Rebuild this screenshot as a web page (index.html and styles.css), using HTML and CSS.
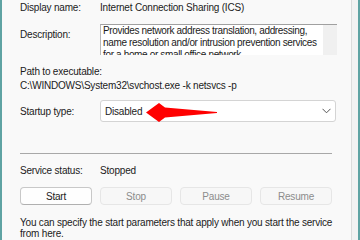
FILE: index.html
```html
<!DOCTYPE html>
<html lang="en">
<head>
<meta charset="UTF-8">
<title>Internet Connection Sharing (ICS) Properties</title>
<link rel="stylesheet" href="styles.css">
</head>
<body>

<div class="window">
  <div class="panel">
    <div class="row">
      <span class="label">Display name:</span>
      <span class="value">Internet Connection Sharing (ICS)</span>
    </div>

    <div class="row desc-row">
      <span class="label desc-label">Description:</span>
      <div class="desc-box">
        <div class="desc-text">Provides network address translation, addressing, name resolution and/or intrusion prevention services for a home or small office network.</div>
        <div class="scroll-track"></div>
      </div>
    </div>

    <div class="path">
      <div>Path to executable:</div>
      <div>C:\WINDOWS\System32\svchost.exe -k netsvcs -p</div>
    </div>

    <div class="row startup-row">
      <span class="label">Startup type:</span>
      <div class="combo">
        <span class="combo-text">Disabled</span>
        <svg class="arrow" width="71" height="19" viewBox="0 0 71 19">
          <path d="M0 9.5 L13 0 L19 4.5 L71 9 L71 10 L19 14.5 L13 19 Z" fill="#f00"/>
        </svg>
        <svg class="chevron" width="9" height="6" viewBox="0 0 9 6">
          <path d="M0.5 0.8 L4.5 4.8 L8.5 0.8" fill="none" stroke="#555" stroke-width="1"/>
        </svg>
      </div>
    </div>

    <hr class="sep">

    <div class="row status-row">
      <span class="label">Service status:</span>
      <span class="value">Stopped</span>
    </div>

    <div class="buttons">
      <button class="btn">Start</button>
      <button class="btn" disabled>Stop</button>
      <button class="btn" disabled>Pause</button>
      <button class="btn" disabled>Resume</button>
    </div>

    <p class="note">You can specify the start parameters that apply when you start the service from here.</p>
  </div>
  <div class="edge"></div>
</div>

</body>
</html>
```

FILE: styles.css
```css
:root {
  --bg: #f9f9f9;
  --text: #1b1b1b;
  --teal: #5fa3a3;
}
body {
  margin: 0;
  background: var(--bg);
  font-family: 'Liberation Sans', Arial, sans-serif;
  font-size: 10px;
  letter-spacing: -0.2px;
  line-height: 13px;
  color: var(--text);
  overflow: hidden;
}
.window {
  display: flex;
  height: 240px;
  border-left: 2px solid var(--teal);
}
.panel {
  flex: 1;
  padding: 1px 0 0 18px;
  min-width: 0;
}
.edge {
  width: 6px;
  background: #f2f2f2;
  border-left: 1px solid #dcdcdc;
  border-right: 2px solid var(--teal);
}
.row {
  display: flex;
  align-items: flex-start;
}
.label {
  width: 80px;
  flex: none;
}
.value {
  white-space: nowrap;
}
.desc-row {
  margin-top: 10px;
}
.desc-label {
  padding-top: 4px;
}
.desc-box {
  display: flex;
  width: 236px;
  height: 30px;
  background: #fff;
  border-top: 1px solid #a0a0a0;
  border-left: 1px solid #b8b8b8;
  overflow: hidden;
}
.desc-text {
  flex: 1;
  padding: 0 0 0 2px;
  line-height: 12px;
  letter-spacing: -0.35px;
}
.scroll-track {
  width: 14px;
  background: #f0f0f0;
}
.path {
  margin-top: 10px;
  line-height: 14px;
}
.startup-row {
  margin-top: 7px;
  align-items: center;
}
.combo {
  position: relative;
  display: flex;
  align-items: center;
  width: 226px;
  height: 20px;
  padding: 0 4px;
  background: #fff;
  border: 1px solid #d4d4d4;
  border-radius: 3px;
}
.combo-text {
  flex: 1;
}
.arrow {
  position: absolute;
  left: 45px;
  top: 2px;
}
.sep {
  margin: 31px 0 0 0;
  width: 312px;
  border: none;
  border-top: 1px solid #a8a8a8;
}
.status-row {
  margin-top: 10px;
}
.buttons {
  display: flex;
  gap: 8px;
  margin-top: 10px;
}
.btn {
  width: 72px;
  height: 18px;
  padding: 0;
  font: inherit;
  letter-spacing: inherit;
  color: var(--text);
  background: #fefefe;
  border: 1px solid #c8c8c8;
  border-bottom-color: #b0b0b0;
  border-radius: 4px;
}
.btn:disabled {
  color: #8c8c8c;
  background: #f7f7f7;
  border-color: #e6e6e6;
}
.note {
  margin: 12px 0 0;
  width: 316px;
  line-height: 11px;
}
```
